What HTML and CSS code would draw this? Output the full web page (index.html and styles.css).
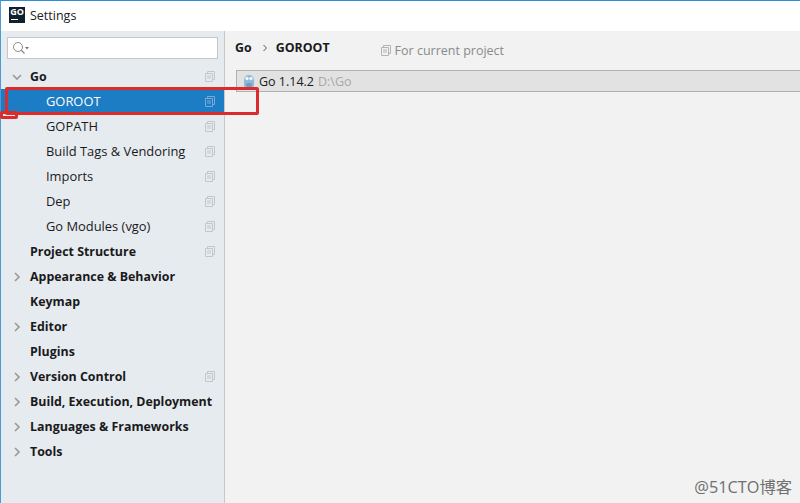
FILE: index.html
```html
<!DOCTYPE html>
<html lang="en">
<head>
<meta charset="utf-8">
<title>Settings</title>
<link rel="stylesheet" href="styles.css">
</head>
<body>
<div class="window">
  <header class="titlebar">
    <span class="app-logo"><span class="app-logo-text">GO</span><span class="app-logo-bar"></span></span>
    <span class="title">Settings</span>
  </header>
  <div class="main">
    <aside class="sidebar">
      <div class="search">
        <svg class="search-icon" width="18" height="14" viewBox="0 0 18 14"><circle cx="6" cy="6" r="4.5" fill="none" stroke="#8c8c8c"/><path d="M9.3 9.3L12.5 12.5" stroke="#8c8c8c" stroke-width="1.3"/><path d="M13 6h4l-2 2.5z" fill="#777"/></svg>
      </div>
      <ul class="tree">
        <li class="row bold"><svg class="arrow" width="10" height="10" viewBox="0 0 10 10"><path d="M1 3l4 4 4-4" fill="none" stroke="#9a9a9a" stroke-width="1.7"/></svg><span class="label">Go</span><svg class="copy" width="10" height="11" viewBox="0 0 10 11"><path d="M2.5 2.5V.5h7v8h-2M.5 2.5h7v8h-7zM2 5h4M2 7h4" fill="none" stroke="#c2c7cc"/></svg></li>
        <li class="row child selected"><span class="label">GOROOT</span><svg class="copy" width="10" height="11" viewBox="0 0 10 11"><path d="M2.5 2.5V.5h7v8h-2M.5 2.5h7v8h-7zM2 5h4M2 7h4" fill="none" stroke="#7aaad4"/></svg></li>
        <li class="row child"><span class="label">GOPATH</span><svg class="copy" width="10" height="11" viewBox="0 0 10 11"><path d="M2.5 2.5V.5h7v8h-2M.5 2.5h7v8h-7zM2 5h4M2 7h4" fill="none" stroke="#c2c7cc"/></svg></li>
        <li class="row child"><span class="label">Build Tags &amp; Vendoring</span><svg class="copy" width="10" height="11" viewBox="0 0 10 11"><path d="M2.5 2.5V.5h7v8h-2M.5 2.5h7v8h-7zM2 5h4M2 7h4" fill="none" stroke="#c2c7cc"/></svg></li>
        <li class="row child"><span class="label">Imports</span><svg class="copy" width="10" height="11" viewBox="0 0 10 11"><path d="M2.5 2.5V.5h7v8h-2M.5 2.5h7v8h-7zM2 5h4M2 7h4" fill="none" stroke="#c2c7cc"/></svg></li>
        <li class="row child"><span class="label">Dep</span><svg class="copy" width="10" height="11" viewBox="0 0 10 11"><path d="M2.5 2.5V.5h7v8h-2M.5 2.5h7v8h-7zM2 5h4M2 7h4" fill="none" stroke="#c2c7cc"/></svg></li>
        <li class="row child"><span class="label">Go Modules (vgo)</span><svg class="copy" width="10" height="11" viewBox="0 0 10 11"><path d="M2.5 2.5V.5h7v8h-2M.5 2.5h7v8h-7zM2 5h4M2 7h4" fill="none" stroke="#c2c7cc"/></svg></li>
        <li class="row bold"><span class="spacer"></span><span class="label">Project Structure</span><svg class="copy" width="10" height="11" viewBox="0 0 10 11"><path d="M2.5 2.5V.5h7v8h-2M.5 2.5h7v8h-7zM2 5h4M2 7h4" fill="none" stroke="#c2c7cc"/></svg></li>
        <li class="row bold"><svg class="arrow" width="10" height="10" viewBox="0 0 10 10"><path d="M3 1l4 4-4 4" fill="none" stroke="#9a9a9a" stroke-width="1.7"/></svg><span class="label">Appearance &amp; Behavior</span></li>
        <li class="row bold"><span class="spacer"></span><span class="label">Keymap</span></li>
        <li class="row bold"><svg class="arrow" width="10" height="10" viewBox="0 0 10 10"><path d="M3 1l4 4-4 4" fill="none" stroke="#9a9a9a" stroke-width="1.7"/></svg><span class="label">Editor</span></li>
        <li class="row bold"><span class="spacer"></span><span class="label">Plugins</span></li>
        <li class="row bold"><svg class="arrow" width="10" height="10" viewBox="0 0 10 10"><path d="M3 1l4 4-4 4" fill="none" stroke="#9a9a9a" stroke-width="1.7"/></svg><span class="label">Version Control</span><svg class="copy" width="10" height="11" viewBox="0 0 10 11"><path d="M2.5 2.5V.5h7v8h-2M.5 2.5h7v8h-7zM2 5h4M2 7h4" fill="none" stroke="#c2c7cc"/></svg></li>
        <li class="row bold"><svg class="arrow" width="10" height="10" viewBox="0 0 10 10"><path d="M3 1l4 4-4 4" fill="none" stroke="#9a9a9a" stroke-width="1.7"/></svg><span class="label">Build, Execution, Deployment</span></li>
        <li class="row bold"><svg class="arrow" width="10" height="10" viewBox="0 0 10 10"><path d="M3 1l4 4-4 4" fill="none" stroke="#9a9a9a" stroke-width="1.7"/></svg><span class="label">Languages &amp; Frameworks</span></li>
        <li class="row bold"><svg class="arrow" width="10" height="10" viewBox="0 0 10 10"><path d="M3 1l4 4-4 4" fill="none" stroke="#9a9a9a" stroke-width="1.7"/></svg><span class="label">Tools</span></li>
      </ul>
    </aside>
    <section class="content">
      <div class="breadcrumb">
        <span class="crumb">Go</span>
        <svg class="crumb-sep" width="6" height="8" viewBox="0 0 6 8"><path d="M1.5 1l3 3-3 3" fill="none" stroke="#555"/></svg>
        <span class="crumb">GOROOT</span>
        <span class="scope"><svg class="scope-icon" width="10" height="11" viewBox="0 0 10 11"><path d="M2.5 2.5V.5h7v8h-2M.5 2.5h7v8h-7zM2 5h4M2 7h4" fill="none" stroke="#b4b4b4"/></svg>For current project</span>
      </div>
      <div class="sdk-bar">
        <svg class="gopher" width="12" height="15" viewBox="0 0 12 15"><path d="M1 6a5 5 0 0 1 10 0v5a3 3 0 0 1-3 3H4a3 3 0 0 1-3-3z" fill="#8db9d8"/><circle cx="4" cy="4.5" r="1.7" fill="#eef5fa"/><circle cx="8" cy="4.5" r="1.7" fill="#eef5fa"/><rect x="3" y="9" width="6" height="4" rx="2" fill="#6d9fc4"/></svg>
        <span class="sdk-name">Go 1.14.2</span>
        <span class="sdk-path">D:\Go</span>
      </div>
    </section>
  </div>
  <div class="mark mark-row"></div>
  <div class="mark mark-small"></div>
  <div class="watermark">@51CTO博客</div>
</div>
</body>
</html>
```
FILE: styles.css
```css
* { box-sizing: border-box; }
html, body { margin: 0; padding: 0; }
body { width: 800px; height: 503px; overflow: hidden; font-family: "Open Sans", "Noto Sans", "Noto Sans CJK SC", sans-serif; font-size: 12.9px; color: #1a1a1a; }
.window { position: relative; width: 800px; height: 503px; display: flex; flex-direction: column; background: #f2f2f2; border-top: 1px solid #2f8fd6; border-left: 1px solid #4a9bd8; }
.titlebar { flex: none; height: 30px; background: #fff; display: flex; align-items: center; padding: 0 0 2px 8px; gap: 5px; }
.app-logo { width: 16px; height: 16px; background: #10202c; display: flex; flex-direction: column; align-items: center; color: #fff; position: relative; }
.app-logo-text { font-size: 9px; font-weight: 700; line-height: 10px; }
.app-logo-bar { width: 7px; height: 1px; background: #fff; align-self: flex-start; margin: 2px 0 0 2px; }
.title { font-size: 12.5px; color: #222; }
.main { flex: 1; display: flex; min-height: 0; }
.sidebar { flex: none; width: 224px; background: #e6ebf0; border-right: 1px solid #c8c8c8; padding-top: 6px; }
.search { height: 22px; margin: 0 6px 0 6px; background: #fff; border: 1px solid #c4c8cc; display: flex; align-items: center; padding-left: 4px; }
.search-icon { display: block; }
.tree { list-style: none; margin: 5px 0 0; padding: 0; }
.row { height: 25px; display: flex; align-items: center; padding: 0 9px 0 11px; color: #1a1a1a; white-space: nowrap; }
.arrow { flex: none; width: 10px; margin-right: 8px; }
.spacer { flex: none; width: 18px; }
.label { flex: 1; }
.bold .label { font-weight: 700; font-size: 12.4px; }
.child { padding-left: 45px; padding-bottom: 1px; }
.selected { background: #1c7cc4; color: #fff; }
.copy { flex: none; display: block; }
.content { flex: 1; min-width: 0; }
.breadcrumb { height: 39px; display: flex; align-items: center; padding: 0 0 6px 10px; }
.crumb { font-weight: 700; font-size: 12.4px; }
.crumb-sep { margin: 0 8px 0 10px; }
.scope { margin-left: 51px; display: flex; align-items: center; color: #8a8a8a; font-size: 12.5px; gap: 4px; padding-top: 6px; }
.sdk-bar { height: 22px; margin-left: 11px; background: #e2e2e2; border: 1px solid #b0b0b0; border-right: 0; display: flex; align-items: center; padding-left: 6px; gap: 4px; font-size: 12.5px; }
.gopher { flex: none; }
.sdk-path { color: #a8a8a8; }
.mark { position: absolute; border: 3px solid #dc2b2b; border-radius: 2px; pointer-events: none; }
.mark-row { left: 4px; top: 86px; width: 254px; height: 28px; }
.mark-small { left: -1px; top: 110px; width: 18px; height: 8px; }
.watermark { position: absolute; right: 8px; bottom: 5px; font-size: 16.3px; color: #6f6f6f; }
```
